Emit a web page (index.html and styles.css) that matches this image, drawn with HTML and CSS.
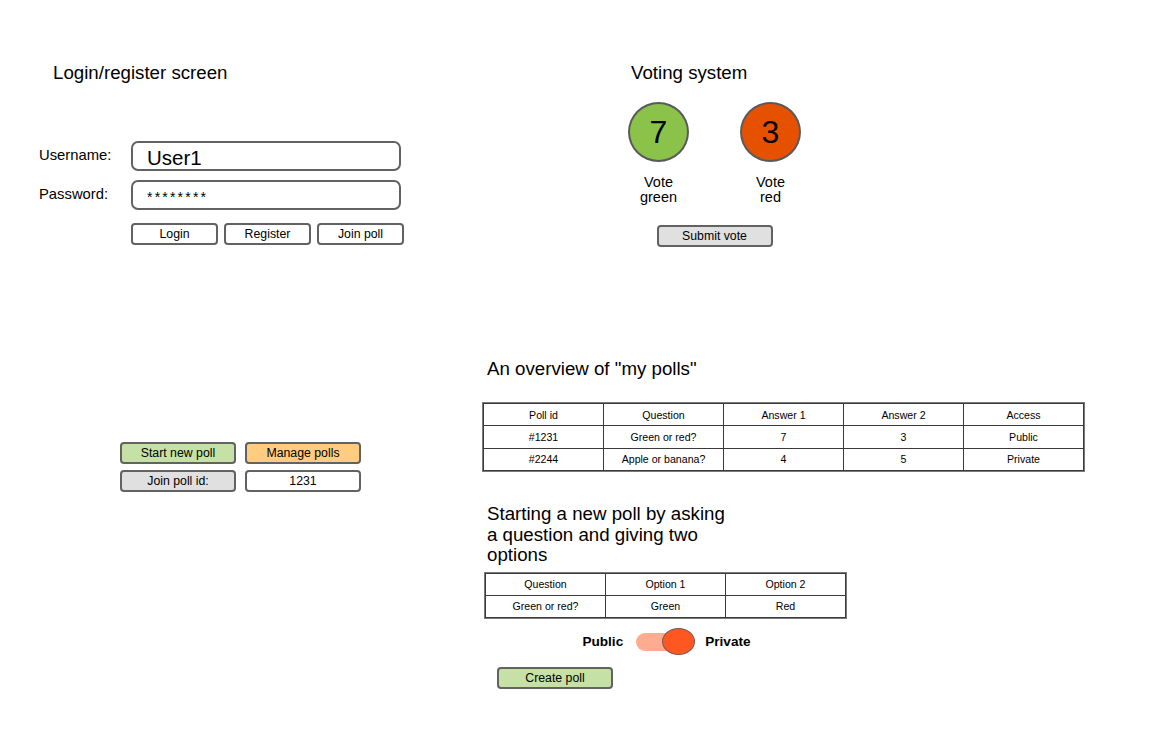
FILE: index.html
```html
<!DOCTYPE html>
<html lang="en">
<head>
<meta charset="utf-8">
<title>Poll app wireframes</title>
<link rel="stylesheet" href="styles.css">
</head>
<body>
<main class="canvas">

  <section class="panel login">
    <h2 class="title login-title">Login/register screen</h2>
    <div class="form">
      <label class="label">Username:</label>
      <div class="input input-user">User1</div>
      <label class="label">Password:</label>
      <div class="input input-pass">********</div>
    </div>
    <div class="btn-row">
      <button class="btn">Login</button>
      <button class="btn">Register</button>
      <button class="btn">Join poll</button>
    </div>
  </section>

  <section class="panel voting">
    <h2 class="title">Voting system</h2>
    <div class="options">
      <div class="option">
        <div class="circle green">7</div>
        <div class="vote-label">Vote<br>green</div>
      </div>
      <div class="option">
        <div class="circle red">3</div>
        <div class="vote-label">Vote<br>red</div>
      </div>
    </div>
    <button class="btn btn-gray submit">Submit vote</button>
  </section>

  <section class="panel manage">
    <button class="btn btn-green">Start new poll</button>
    <button class="btn btn-orange">Manage polls</button>
    <button class="btn btn-gray">Join poll id:</button>
    <div class="btn">1231</div>
  </section>

  <section class="panel overview">
    <h2 class="title">An overview of "my polls"</h2>
    <table class="grid grid-wide">
      <tr><td>Poll id</td><td>Question</td><td>Answer 1</td><td>Answer 2</td><td>Access</td></tr>
      <tr><td>#1231</td><td>Green or red?</td><td>7</td><td>3</td><td>Public</td></tr>
      <tr><td>#2244</td><td>Apple or banana?</td><td>4</td><td>5</td><td>Private</td></tr>
    </table>
  </section>

  <section class="panel newpoll">
    <h2 class="title title-wrap">Starting a new poll by asking a question and giving two options</h2>
    <table class="grid grid-narrow">
      <tr><td>Question</td><td>Option 1</td><td>Option 2</td></tr>
      <tr><td>Green or red?</td><td>Green</td><td>Red</td></tr>
    </table>
    <div class="toggle-row">
      <span class="toggle-text">Public</span>
      <span class="toggle">
        <span class="track"></span>
        <span class="knob"></span>
      </span>
      <span class="toggle-text">Private</span>
    </div>
    <button class="btn btn-green create">Create poll</button>
  </section>

</main>
</body>
</html>
```

FILE: styles.css
```css
* { box-sizing: border-box; }

html, body {
  margin: 0;
  padding: 0;
  background: #ffffff;
}

body {
  font-family: "Liberation Sans", Arial, Helvetica, sans-serif;
  color: #000;
}

.canvas {
  position: relative;
  width: 1152px;
  height: 733px;
  overflow: hidden;
}

.panel {
  position: absolute;
}

.title {
  margin: 0;
  font-size: 18.7px;
  font-weight: normal;
  line-height: 22px;
}

/* Login */
.login { left: 39px; top: 62px; }
.login-title { padding-left: 14px; }

.form {
  margin-top: 57px;
  display: grid;
  grid-template-columns: 92px 270px;
  grid-auto-rows: 30px;
  row-gap: 9px;
  align-items: center;
}

.label {
  font-size: 14.8px;
  line-height: 16px;
  margin-top: -2px;
}

.input {
  height: 30px;
  border: 2px solid #626262;
  border-radius: 7px;
  padding-left: 14px;
  display: flex;
  align-items: center;
  background: #fff;
}

.input-user { font-size: 20.5px; padding-top: 3px; }
.input-pass { font-size: 14px; padding-top: 4px; letter-spacing: 2.2px; }

.btn-row {
  margin-top: 13px;
  margin-left: 92px;
  display: flex;
  gap: 6px;
}

.btn {
  font-family: inherit;
  font-size: 12.3px;
  color: #000;
  height: 22px;
  width: 87px;
  padding: 0;
  border: 2px solid #626262;
  border-radius: 4px;
  background: #fff;
  display: flex;
  align-items: center;
  justify-content: center;
}

.btn-gray { background: #e0e0e0; }
.btn-green { background: #c5e1a5; }
.btn-orange { background: #ffcc80; }

/* Voting */
.voting {
  left: 628px;
  top: 62px;
  width: 173px;
  display: flex;
  flex-direction: column;
}
.voting .title { padding-left: 3px; }

.options {
  margin-top: 18px;
  display: flex;
  justify-content: space-between;
}

.option {
  width: 61px;
  display: flex;
  flex-direction: column;
  align-items: center;
}

.circle {
  width: 61px;
  height: 60px;
  border-radius: 50%;
  border: 2px solid #5a5a5a;
  display: flex;
  align-items: center;
  justify-content: center;
  font-size: 32px;
  padding-top: 1px;
}
.green { background: #8bc34a; }
.red { background: #e65100; }

.vote-label {
  margin-top: 13px;
  font-size: 14.5px;
  line-height: 15px;
  text-align: center;
}

.submit {
  align-self: center;
  width: 116px;
  height: 22px;
  margin-top: 20px;
}

/* Manage */
.manage {
  left: 120px;
  top: 442px;
  display: grid;
  grid-template-columns: 116px 116px;
  grid-auto-rows: 22px;
  column-gap: 9px;
  row-gap: 6px;
}
.manage .btn { width: 116px; }

/* Tables */
.grid {
  border-collapse: collapse;
  table-layout: fixed;
  font-size: 10.6px;
}
.grid td {
  width: 120px;
  border: 1px solid #3a3a3a;
  text-align: center;
  padding: 0;
}
.grid-wide tr { height: 22.3px; }
.grid-narrow tr { height: 22px; }

.grid-wide { outline: 1px solid #7a7a7a; }
.grid-narrow { outline: 1px solid #7a7a7a; }

.overview { left: 483px; top: 358px; }
.overview .title { padding-left: 4px; }
.overview .grid { margin-top: 23px; }

/* New poll */
.newpoll {
  left: 485px;
  top: 504px;
  width: 361px;
  display: flex;
  flex-direction: column;
}
.title-wrap {
  padding-left: 2px;
  width: 250px;
  line-height: 20.5px;
}
.newpoll .grid { margin-top: 7px; }

.toggle-row {
  margin-top: 10px;
  display: flex;
  align-items: center;
  justify-content: center;
  padding-left: 2px;
}

.toggle-text {
  font-size: 13.6px;
  font-weight: bold;
}

.toggle {
  position: relative;
  width: 59px;
  height: 27px;
  display: block;
  margin: 0 10px 0 13px;
}
.track {
  position: absolute;
  left: 0;
  top: 5px;
  width: 44px;
  height: 18px;
  border-radius: 9px;
  background: #ffab91;
}
.knob {
  position: absolute;
  right: 0;
  top: 0;
  width: 33px;
  height: 27px;
  border-radius: 50%;
  background: #ff5722;
  border: 1.5px solid #7a5a50;
}

.create {
  margin-top: 12px;
  margin-left: 12px;
  width: 116px;
}
```
